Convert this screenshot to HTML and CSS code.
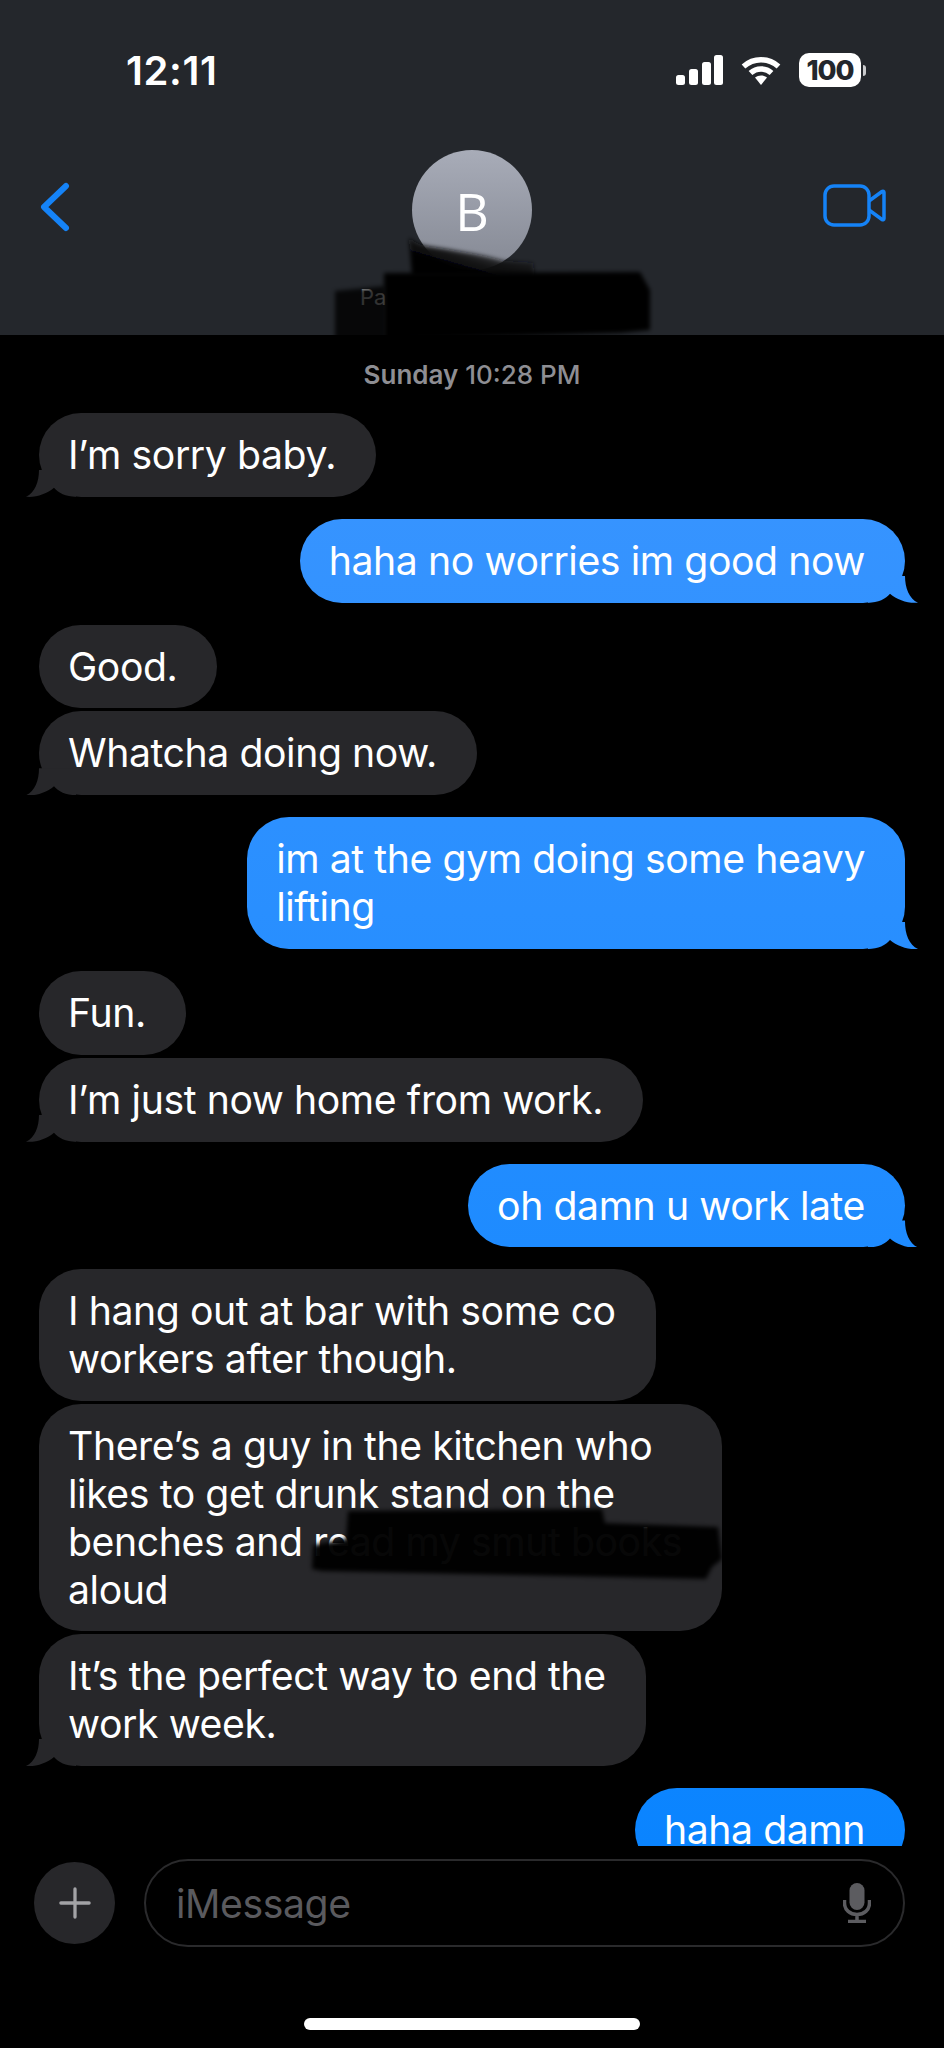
FILE: index.html
```html
<!DOCTYPE html>
<html lang="en">
<head>
<meta charset="utf-8">
<title>Messages</title>
<link rel="stylesheet" href="styles.css">
</head>
<body>
<div class="phone">
  <header class="header">
    <div class="status">
      <span class="clock">12:11</span>
      <div class="status-icons">
        <svg class="signal" viewBox="0 0 47 30"><rect x="0" y="20" width="9" height="10" rx="2.5"/><rect x="13" y="14" width="9" height="16" rx="2.5"/><rect x="26" y="7" width="9" height="23" rx="2.5"/><rect x="38" y="0" width="9" height="30" rx="2.5"/></svg>
        <svg class="wifi" viewBox="0 0 40 29"><path class="arc" d="M2.5 10.5C12.5 1.5 27.5 1.5 37.5 10.5"/><path class="arc" d="M9.5 17C15.5 11.5 24.5 11.5 30.5 17"/><path class="dot" d="M14 21.5C17.5 18.8 22.5 18.8 26 21.5L20 29Z"/></svg>
        <div class="battery"><span class="battery-body">100</span><span class="battery-nub"></span></div>
      </div>
    </div>
    <div class="nav">
      <svg class="back" viewBox="0 0 30 50"><path d="M26 4L4 25L26 46"/></svg>
      <div class="avatar">B</div>
      <svg class="video" viewBox="0 0 63 43"><rect x="2" y="2" width="44" height="39" rx="9"/><path d="M46 17L59 7.5C60 6.8 61 7.3 61 8.5V34.5C61 35.7 60 36.2 59 35.5L46 26"/></svg>
    </div>
    <div class="contact-name">Pa</div>
    <svg class="header-redaction" viewBox="0 0 944 335">
      <defs>
        <filter id="soft"><feGaussianBlur stdDeviation="2"/></filter>
        <linearGradient id="fade" gradientUnits="userSpaceOnUse" x1="472" y1="244" x2="464" y2="272">
          <stop offset="0" stop-color="#17181b" stop-opacity=".6"/>
          <stop offset=".6" stop-color="#0c0c0e" stop-opacity=".95"/>
          <stop offset="1" stop-color="#000"/>
        </linearGradient>
      </defs>
      <path class="mark-c" d="M409 238C414 242 420 245 426 246C452 250 480 254 504 261L533 263L534 276L412 276Z"/>
      <path class="mark-a" d="M335 291L385 286L385 340L335 340Z"/>
      <path class="mark-b" d="M384 273L640 272L650 290L650 330L620 333L384 340Z"/>
    </svg>
  </header>
  <main class="thread">
    <div class="date"><b>Sunday</b> 10:28 PM</div>
    <div class="bubble in tail">I’m sorry baby.</div>
    <div class="bubble out tail">haha no worries im good now</div>
    <div class="bubble in">Good.</div>
    <div class="bubble in tail close">Whatcha doing now.</div>
    <div class="bubble out tail">im at the gym doing some heavy<br>lifting</div>
    <div class="bubble in">Fun.</div>
    <div class="bubble in tail close">I’m just now home from work.</div>
    <div class="bubble out tail">oh damn u work late</div>
    <div class="bubble in">I hang out at bar with some co<br>workers after though.</div>
    <div class="bubble in close has-mark">There’s a guy in the kitchen who<br>likes to get drunk stand on the<br>benches and read my smut books<br>aloud
      <svg class="body-redaction" viewBox="0 0 420 72"><path d="M38 2L292 0L295 14L408 18L412 50L402 58L396 70L12 62L2 60L3 36L36 30Z"/></svg>
    </div>
    <div class="bubble in tail close">It’s the perfect way to end the<br>work week.</div>
    <div class="bubble out">haha damn</div>
  </main>
  <footer class="composer">
    <div class="plus"><svg viewBox="0 0 34 34"><path d="M17 2V32M2 17H32"/></svg></div>
    <div class="field">
      <span class="placeholder">iMessage</span>
      <svg class="mic" viewBox="0 0 28 40"><rect x="6.5" y="0" width="15" height="27" rx="7.5"/><path class="mic-arc" d="M1.5 17V20C1.5 27 7 31.500 14 31.500C21 31.500 26.500 27 26.500 20V17M14 32V38M5 38.500H23"/></svg>
    </div>
  </footer>
  <div class="home-area"><div class="home-bar"></div></div>
</div>
</body>
</html>
```

FILE: styles.css
```css
* { box-sizing: border-box; }
html, body { margin: 0; padding: 0; background: #000; }
body { font-family: Inter, "Liberation Sans", sans-serif; color: #fff; }

.phone {
  width: 944px;
  height: 2048px;
  display: flex;
  flex-direction: column;
  overflow: hidden;
  background: #000;
}

/* header */
.header {
  position: relative;
  flex: 0 0 335px;
  height: 335px;
  background: #24272c;
  overflow: hidden;
}
.status {
  height: 150px;
  display: flex;
  justify-content: space-between;
  align-items: flex-start;
  padding: 49px 78px 0 126px;
}
.clock {
  font-size: 40px;
  line-height: 44px;
  font-weight: 600;
  letter-spacing: .6px;
}
.status-icons {
  display: flex;
  align-items: flex-start;
  padding-top: 4px;
}
.signal { width: 47px; height: 30px; margin-top: 2px; fill: #fff; }
.wifi { width: 40px; height: 29px; margin: 3px 18px 0 18px; }
.wifi .arc { fill: none; stroke: #fff; stroke-width: 5.500; stroke-linecap: butt; }
.wifi .dot { fill: #fff; }
.battery { display: flex; align-items: center; }
.battery-body {
  width: 62px;
  height: 34px;
  border-radius: 10px;
  background: #fff;
  color: #24272c;
  font-size: 27.500px;
  line-height: 34px;
  font-weight: 800;
  letter-spacing: -1px;
  text-align: center;
}
.battery-nub {
  width: 3px;
  height: 11px;
  margin-left: 2px;
  background: #c9cacc;
  border-radius: 0 3px 3px 0;
}
.nav {
  display: grid;
  grid-template-columns: 1fr 120px 1fr;
  align-items: start;
  padding: 0 58px;
  height: 133px;
}
.back {
  width: 30px;
  height: 50px;
  margin-top: 32px;
  margin-left: -18px;
  fill: none;
  stroke: #1583f7;
  stroke-width: 6;
  stroke-linecap: round;
  stroke-linejoin: round;
}
.avatar {
  width: 120px;
  height: 120px;
  border-radius: 50%;
  background: linear-gradient(#a8acb8, #858994);
  color: #fff;
  font-family: "Open Sans", sans-serif;
  font-size: 52px;
  font-weight: 500;
  line-height: 122px;
  text-align: center;
}
.video {
  justify-self: end;
  width: 63px;
  height: 43px;
  margin-top: 34px;
  fill: none;
  stroke: #1583f7;
  stroke-width: 3.500;
  stroke-linejoin: round;
}
.contact-name {
  margin-left: 360px;
  font-size: 22px;
  line-height: 28px;
  color: #fff;
}
.header-redaction {
  position: absolute;
  left: 0;
  top: 0;
  width: 944px;
  height: 335px;
}
.mark-a { fill: #050506; opacity: .8; filter: url(#soft); }
.mark-b { fill: #000; filter: url(#soft); }
.mark-c { fill: url(#fade); filter: url(#soft); }

/* thread */
.thread {
  flex: 0 0 1511px;
  overflow: hidden;
  display: flex;
  flex-direction: column;
  align-items: flex-start;
  padding: 0 39px;
}
.date {
  flex: none;
  align-self: center;
  width: 100%;
  height: 78px;
  padding-top: 23px;
  text-align: center;
  font-size: 26px;
  line-height: 34px;
  font-weight: 500;
  color: #8e8e93;
}
.date b { font-weight: 600; }
.bubble {
  position: relative;
  flex: none;
  padding: 18px 40px 18px 29px;
  margin-top: 22px;
  border-radius: 42px;
  font-size: 39.200px;
  line-height: 47.830px;
  font-weight: 400;
  letter-spacing: -.42px;
  white-space: nowrap;
}
.date + .bubble { margin-top: 0; }
.bubble.close { margin-top: 3px; }
.in { background: #27272a; align-self: flex-start; }
.out {
  align-self: flex-end;
  background: linear-gradient(#3a95ff 400px, #0a84ff 1846px) fixed;
}
.tail::after {
  content: "";
  position: absolute;
  bottom: 0;
  width: 50px;
  height: 27px;
  background: inherit;
}
.in.tail::after {
  left: -13px;
  clip-path: path("M13 0C13 12 9 23 0 27C10 28 21 24 28 18C32 23 40 27 50 27L50 0Z");
}
.out.tail::after {
  right: -13px;
  clip-path: path("M37 0C37 12 41 23 50 27C40 28 29 24 22 18C18 23 10 27 0 27L0 0Z");
}
.body-redaction {
  position: absolute;
  left: 271px;
  top: 105px;
  width: 420px;
  height: 72px;
  fill: #000;
  opacity: .97;
  filter: blur(2px);
}

/* composer */
.composer {
  flex: 0 0 100px;
  display: flex;
  align-items: flex-start;
  padding: 13px 39px 0 34px;
  gap: 29px;
}
.plus {
  flex: none;
  width: 81px;
  height: 82px;
  margin-top: 3px;
  border-radius: 50%;
  background: #27272a;
  display: flex;
  align-items: center;
  justify-content: center;
}
.plus svg {
  width: 32px;
  height: 32px;
  fill: none;
  stroke: #a3a3a6;
  stroke-width: 3.500;
  stroke-linecap: round;
}
.field {
  flex: 1;
  height: 88px;
  border: 2.500px solid #2a2a2c;
  border-radius: 44px;
  display: flex;
  justify-content: space-between;
  align-items: center;
  padding: 0 32px 0 30px;
}
.placeholder {
  font-size: 39.200px;
  letter-spacing: -.42px;
  color: #5a5a5e;
}
.mic { width: 28px; height: 40px; fill: #5c5c60; }
.mic-arc { fill: none; stroke: #5c5c60; stroke-width: 3.500; }
.home-area {
  flex: 1;
  display: flex;
  justify-content: center;
  padding-top: 71px;
}
.home-bar {
  width: 336px;
  height: 12px;
  border-radius: 6px;
  background: #fff;
}
```
